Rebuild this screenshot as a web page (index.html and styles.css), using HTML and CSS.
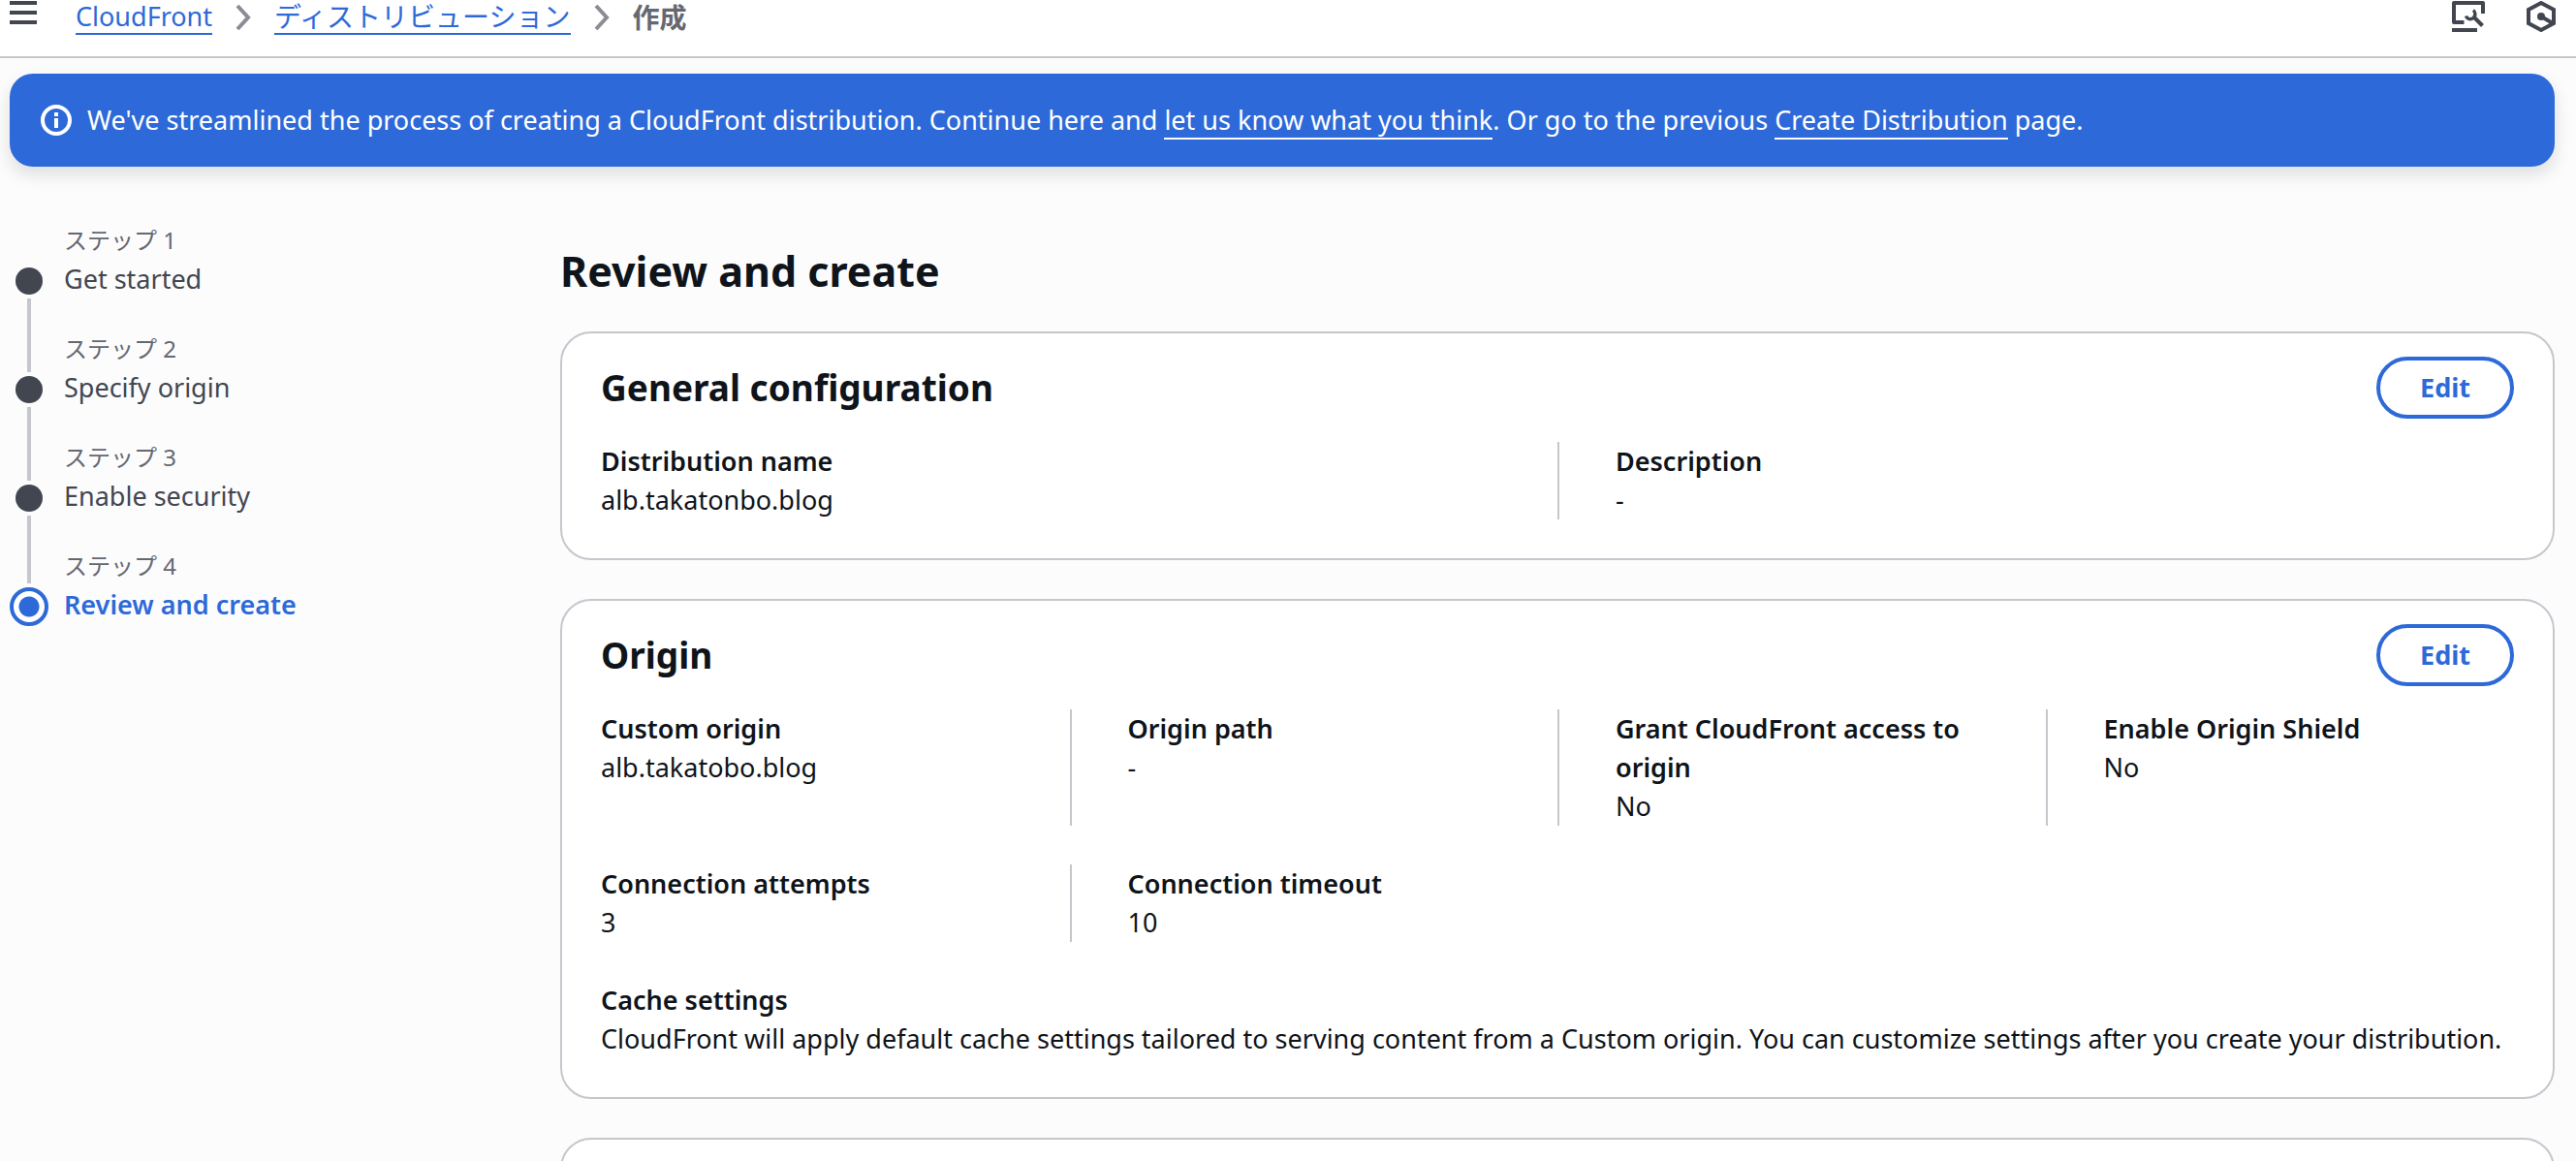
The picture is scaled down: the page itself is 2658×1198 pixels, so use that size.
FILE: index.html
```html
<!DOCTYPE html>
<html lang="ja">
<head>
<meta charset="utf-8">
<meta name="viewport" content="width=device-width, initial-scale=1">
<title>CloudFront</title>
<link rel="stylesheet" href="styles.css">
</head>
<body>
<header class="topbar">
  <button class="icon-button menu-button" type="button" aria-label="Menu">
    <svg class="menu-icon" viewBox="0 0 28 24" aria-hidden="true"><path d="M0 2h28M0 12h28M0 22h28"/></svg>
  </button>
  <nav class="breadcrumbs" aria-label="Breadcrumbs">
    <a class="crumb-link" href="#">CloudFront</a>
    <svg class="chevron" viewBox="0 0 16 26" aria-hidden="true"><path d="M2 1l11 12L2 25"/></svg>
    <a class="crumb-link crumb-ja" href="#">ディストリビューション</a>
    <svg class="chevron" viewBox="0 0 16 26" aria-hidden="true"><path d="M2 1l11 12L2 25"/></svg>
    <span class="crumb-current crumb-ja" aria-current="page">作成</span>
  </nav>
  <div class="tools">
    <button class="icon-button" type="button" aria-label="Tools">
      <svg class="tool-icon" viewBox="0 0 34 32" aria-hidden="true"><path stroke-linejoin="round" d="M12.500 22H2V2h30v11M0 30h26"/><path d="M22 16l9.500 9.500"/><path stroke-width="3.500" d="M14.500 15.500c1.500 4 6 4 8 1.500 2-2 2-5.500-.5-7.500"/></svg>
    </button>
    <button class="icon-button" type="button" aria-label="Resources">
      <svg class="hex-icon" viewBox="0 0 30 32" aria-hidden="true"><path d="M15 2l13 7v14l-13 7-13-7V9z"/><path d="M15 16l12 7"/><circle cx="15" cy="16" r="4"/></svg>
    </button>
  </div>
</header>

<div class="banner" role="status">
  <svg class="info-icon" viewBox="0 0 32 32" aria-hidden="true"><circle cx="16" cy="16" r="14"/><path d="M16 8v4M16 14v10"/></svg>
  <p class="banner-text">We've streamlined the process of creating a CloudFront distribution. Continue here and <a class="banner-link" href="#">let us know what you think</a>. Or go to the previous <a class="banner-link" href="#">Create Distribution</a> page.</p>
</div>

<div class="layout">
  <nav class="steps" aria-label="Steps">
    <ol class="step-list">
      <li class="step"><span class="step-label">ステップ 1</span><a class="step-title" href="#">Get started</a></li>
      <li class="step"><span class="step-label">ステップ 2</span><a class="step-title" href="#">Specify origin</a></li>
      <li class="step"><span class="step-label">ステップ 3</span><a class="step-title" href="#">Enable security</a></li>
      <li class="step step-current" aria-current="step"><span class="step-label">ステップ 4</span><span class="step-title">Review and create</span></li>
    </ol>
  </nav>

  <main class="content">
    <h1 class="page-title">Review and create</h1>

    <section class="card">
      <div class="card-header">
        <h2 class="card-title">General configuration</h2>
        <button class="edit-button" type="button">Edit</button>
      </div>
      <dl class="fields fields-two">
        <div class="field"><dt>Distribution name</dt><dd>alb.takatonbo.blog</dd></div>
        <div class="field"><dt>Description</dt><dd>-</dd></div>
      </dl>
    </section>

    <section class="card">
      <div class="card-header">
        <h2 class="card-title">Origin</h2>
        <button class="edit-button" type="button">Edit</button>
      </div>
      <dl class="fields fields-four">
        <div class="field"><dt>Custom origin</dt><dd>alb.takatobo.blog</dd></div>
        <div class="field"><dt>Origin path</dt><dd>-</dd></div>
        <div class="field"><dt>Grant CloudFront access to origin</dt><dd>No</dd></div>
        <div class="field"><dt>Enable Origin Shield</dt><dd>No</dd></div>
        <div class="field"><dt>Connection attempts</dt><dd>3</dd></div>
        <div class="field"><dt>Connection timeout</dt><dd>10</dd></div>
        <div class="field field-wide"><dt>Cache settings</dt><dd>CloudFront will apply default cache settings tailored to serving content from a Custom origin. You can customize settings after you create your distribution.</dd></div>
      </dl>
    </section>

    <section class="card card-next"></section>
  </main>
</div>
</body>
</html>
```
FILE: styles.css
```css
:root {
  --blue: #2d69d8;
  --ink: #0f141a;
  --gray: #424650;
  --muted: #656871;
  --line: #c6c6cd;
}

*, *::before, *::after { box-sizing: border-box; }

html { height: 100%; }

body {
  display: flex;
  flex-direction: column;
  height: 100%;
  margin: 0;
  overflow: hidden;
  background: #fcfcfd;
  color: var(--ink);
  font-family: "Noto Sans", "Noto Sans CJK JP", sans-serif;
  font-size: 27px;
  line-height: 40px;
}

h1, h2, p, ol, dl, dd { margin: 0; padding: 0; }

svg { display: block; fill: none; stroke: currentColor; stroke-width: 4; }

.topbar {
  display: flex;
  flex: none;
  align-items: flex-start;
  gap: 40px;
  height: 60px;
  padding: 0 21px 0 10px;
  border-bottom: 2px solid var(--line);
  background: #fff;
}

.icon-button {
  padding: 1px 0 0;
  border: 0;
  background: none;
  color: var(--gray);
}

.menu-icon { width: 28px; height: 24px; }
.tool-icon { width: 34px; height: 32px; }
.hex-icon { width: 30px; height: 32px; }
.hex-icon circle { fill: currentColor; stroke: none; }

.breadcrumbs {
  display: flex;
  flex: 1;
  align-items: center;
  gap: 24px;
  height: 36px;
}

.chevron { width: 16px; height: 26px; color: #8c8c94; }

.crumb-link {
  height: 36px;
  border-bottom: 2px solid var(--blue);
  color: var(--blue);
  line-height: 34px;
  text-decoration: none;
}

.crumb-current { color: var(--muted); font-weight: 700; line-height: 34px; }

.crumb-ja { font-size: 28px; }

.tools { display: flex; gap: 43px; }

.banner {
  display: flex;
  flex: none;
  align-items: center;
  gap: 16px;
  min-height: 96px;
  margin: 16px 22px 0 10px;
  padding: 28px 32px;
  border-radius: 24px;
  background: var(--blue);
  box-shadow: 0 8px 16px 2px rgba(0, 7, 22, 0.1);
  color: #fff;
}

.info-icon { flex: none; width: 32px; height: 32px; }

.banner-link { border-bottom: 2px solid #fff; color: inherit; text-decoration: none; }

.layout {
  display: grid;
  grid-template-columns: 568px 1fr;
  padding: 56px 22px 0 10px;
}

.step-list { list-style: none; }

.step {
  position: relative;
  display: flex;
  flex-direction: column;
  height: 112px;
  padding-left: 56px;
}

.step-label { color: var(--muted); font-size: 24px; line-height: 40px; }
.step-title { color: var(--gray); text-decoration: none; }

/* step marker and the line that joins it to the next one */
.step::before {
  content: "";
  position: absolute;
  top: 48px;
  left: 6px;
  width: 28px;
  height: 28px;
  border-radius: 50%;
  background: var(--gray);
}

.step:not(.step-current)::after {
  content: "";
  position: absolute;
  top: 80px;
  left: 18px;
  width: 4px;
  height: 76px;
  background: var(--line);
}

.step:nth-child(3)::after { height: 70px; }

.step-current::before {
  top: 42px;
  left: 0;
  width: 40px;
  height: 40px;
  border: 4px solid var(--blue);
  background: radial-gradient(circle, var(--blue) 10px, #fff 11px);
}

.step-current .step-title { color: var(--blue); font-weight: 600; }

.content { display: flex; flex-direction: column; gap: 40px; padding-top: 22px; }

.page-title { margin-bottom: -8px; font-size: 43px; font-weight: 700; line-height: 60px; }

.card {
  padding: 24px 40px 40px;
  border: 2px solid var(--line);
  border-radius: 32px;
  background: #fff;
}

.card-next { height: 120px; }

.card-header {
  display: flex;
  align-items: center;
  justify-content: space-between;
  margin-bottom: 24px;
}

.card-title { font-size: 37px; font-weight: 700; line-height: 48px; }

.edit-button {
  height: 64px;
  padding: 0 41px;
  border: 4px solid var(--blue);
  border-radius: 32px;
  background: #fff;
  color: var(--blue);
  font: inherit;
  font-weight: 700;
}

.fields { display: grid; row-gap: 40px; margin: 0 -20px; }
.fields-two { grid-template-columns: repeat(2, 1fr); }
.fields-four { grid-template-columns: repeat(4, 1fr); }

.field { padding: 0 40px 0 58px; border-left: 2px solid var(--line); }
.fields-two .field:nth-child(2n + 1),
.fields-four .field:nth-child(4n + 1) { padding-left: 20px; border-left: 0; }
.fields .field-wide { grid-column: 1 / -1; padding: 0 20px; border-left: 0; }

dt { font-weight: 600; }
```
